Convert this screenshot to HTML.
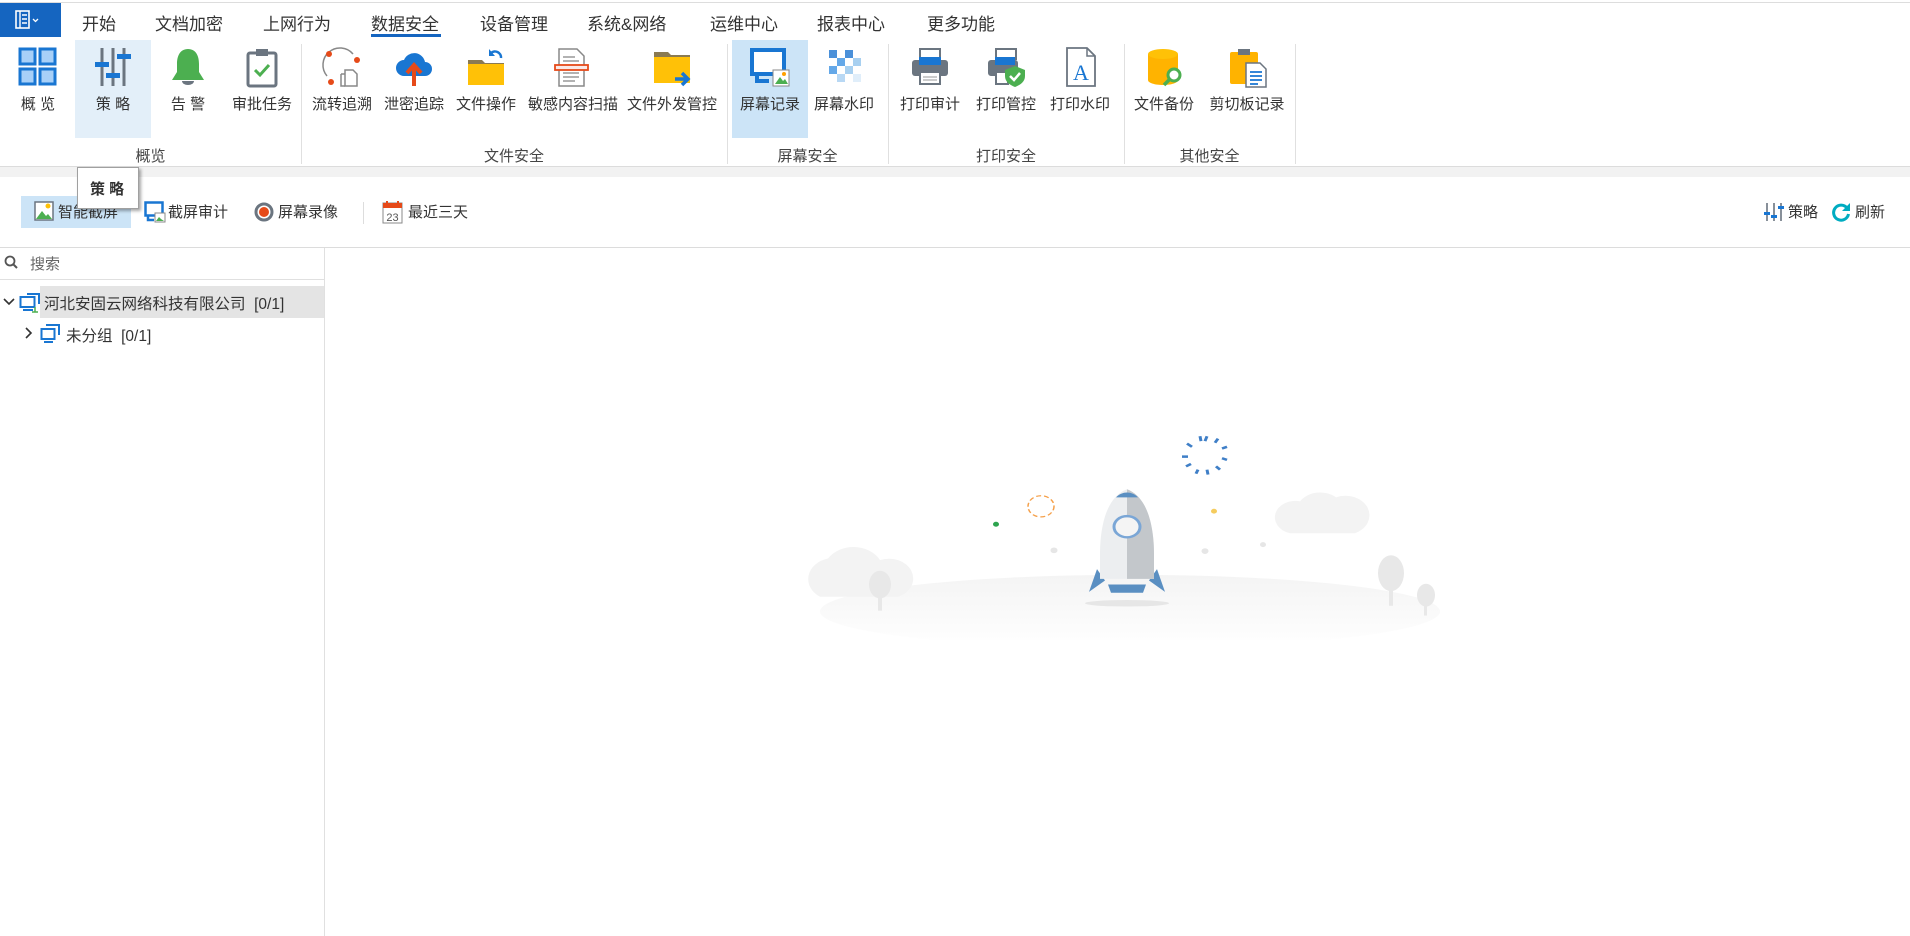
<!DOCTYPE html>
<html><head><meta charset="utf-8"><style>
*{margin:0;padding:0;box-sizing:border-box}
body{width:1910px;height:936px;background:#fff;font-family:"Liberation Sans","Noto Sans CJK SC",sans-serif;color:#333;position:relative;overflow:hidden}
.a{position:absolute}
.tab{position:absolute;top:10px;font-size:17px;color:#333;white-space:nowrap}
.btn{position:absolute;top:40px;height:98px;text-align:center}
.btn svg{position:absolute;left:50%;margin-left:-21px;top:6px}
.btn span{position:absolute;left:0;right:0;top:53px;font-size:15px;white-space:nowrap;color:#333}
.sep{position:absolute;top:44px;width:1px;height:120px;background:#e0e0e0}
.grp{position:absolute;top:145px;font-size:15px;color:#444;text-align:center}
.tb{position:absolute;top:201px;font-size:15px;white-space:nowrap}
</style></head><body>
<div class="a" style="left:0;top:2px;width:1910px;height:1px;background:#ddd"></div>
<div class="a" style="left:0;top:3px;width:61px;height:34px;background:#1565c0"></div>
<svg class="a" style="left:15px;top:10px" width="30" height="20" viewBox="0 0 30 20"><rect x="1" y="1" width="13" height="17" fill="none" stroke="#fff" stroke-width="1.6"/><path d="M5 1v17M7 5h5M7 9h5M7 13h5" stroke="#fff" stroke-width="1.4"/><path d="M18 9l2.5 2.5L23 9" stroke="#fff" stroke-width="1.3" fill="none"/></svg>
<div class="tab" style="left:82px">开始</div>
<div class="tab" style="left:155px">文档加密</div>
<div class="tab" style="left:263px">上网行为</div>
<div class="tab" style="left:371px">数据安全</div>
<div class="a" style="left:371px;top:34px;width:70px;height:3px;background:#1565c0"></div>
<div class="tab" style="left:480px">设备管理</div>
<div class="tab" style="left:587px">系统&amp;网络</div>
<div class="tab" style="left:710px">运维中心</div>
<div class="tab" style="left:817px">报表中心</div>
<div class="tab" style="left:927px">更多功能</div>

<div class="a" style="left:75px;top:40px;width:76px;height:98px;background:#e3eff9"></div>
<div class="a" style="left:732px;top:40px;width:76px;height:98px;background:#cce4f7"></div>

<div class="btn" style="left:0;width:76px"><svg width="42" height="42" viewBox="0 0 42 42"><g fill="#a8d0f8" stroke="#1976d2" stroke-width="3"><rect x="3" y="3" width="15" height="15"/><rect x="23" y="3" width="15" height="15"/><rect x="3" y="23" width="15" height="15"/><rect x="23" y="23" width="15" height="15"/></g></svg><span>概 览</span></div>
<div class="btn" style="left:75px;width:76px"><svg width="42" height="42" viewBox="0 0 42 42"><path d="M10 2v38M21 2v38M32 2v38" stroke="#6b7580" stroke-width="3"/><rect x="3" y="16" width="14" height="5" fill="#1976d2"/><rect x="14" y="27" width="14" height="5" fill="#1976d2"/><rect x="25" y="8" width="14" height="5" fill="#1976d2"/></svg><span>策 略</span></div>
<div class="btn" style="left:150px;width:76px"><svg width="42" height="42" viewBox="0 0 42 42"><path d="M21 3c-8 0-11 7-11 15v8l-5 8h32l-5-8v-8c0-8-3-15-11-15z" fill="#4caf50"/><path d="M15 35a6 4 0 0 0 12 0z" fill="#6b7580"/></svg><span>告 警</span></div>
<div class="btn" style="left:224px;width:76px"><svg width="42" height="42" viewBox="0 0 42 42"><rect x="7" y="7" width="28" height="33" rx="2" fill="#fff" stroke="#6b7580" stroke-width="3"/><rect x="15" y="3" width="12" height="7" fill="#6b7580"/><path d="M14 24l5 5 9-10" stroke="#4caf50" stroke-width="3" fill="none"/></svg><span>审批任务</span></div>
<div class="sep" style="left:301px"></div>
<div class="btn" style="left:304px;width:76px"><svg width="42" height="42" viewBox="0 0 42 42"><path d="M6 30A17 17 0 0 1 32 8" fill="none" stroke="#888" stroke-width="1.5"/><circle cx="8" cy="8" r="3" fill="#e64a19"/><circle cx="36" cy="14" r="3" fill="#e64a19"/><circle cx="10" cy="36" r="3" fill="#e64a19"/><path d="M24 24h8l4 4v12H24z" fill="#fff" stroke="#888" stroke-width="1.5"/><path d="M20 28h4M20 28v12h4" stroke="#888" stroke-width="1.5" fill="none"/></svg><span>流转追溯</span></div>
<div class="btn" style="left:376px;width:76px"><svg width="42" height="42" viewBox="0 0 42 42"><path d="M11 30a8 8 0 0 1 0-16a11 11 0 0 1 21 2a7 7 0 0 1 0 14z" fill="#1976d2"/><path d="M21 40V20M14 27l7-8 7 8" stroke="#e64a19" stroke-width="4" fill="none"/></svg><span>泄密追踪</span></div>
<div class="btn" style="left:448px;width:76px"><svg width="42" height="42" viewBox="0 0 42 42"><path d="M3 14h14l3 3h19v22H3z" fill="#8a7a52"/><rect x="3" y="18" width="36" height="21" fill="#ffc107"/><path d="M36 12a6 6 0 0 0-10-5" stroke="#1976d2" stroke-width="2.5" fill="none"/><path d="M24 3v7h6" fill="#1976d2"/></svg><span>文件操作</span></div>
<div class="btn" style="left:528px;width:86px"><svg width="42" height="42" viewBox="0 0 42 42"><path d="M9 3h18l7 7v30H9z" fill="#fff" stroke="#888" stroke-width="1.5"/><path d="M13 11h12M13 15h16M13 27h16M13 31h16M13 35h12" stroke="#999" stroke-width="1.5"/><rect x="5" y="19" width="33" height="5" fill="#fbe9e7" stroke="#e64a19" stroke-width="1.8"/></svg><span>敏感内容扫描</span></div>
<div class="btn" style="left:624px;width:96px"><svg width="42" height="42" viewBox="0 0 42 42"><path d="M3 6h14l3 3h19v28H3z" fill="#8a7a52"/><rect x="3" y="11" width="36" height="26" fill="#ffc107"/><path d="M24 33h12M31 27l6 6-6 6" stroke="#1976d2" stroke-width="3.5" fill="none"/></svg><span>文件外发管控</span></div>
<div class="sep" style="left:727px"></div>
<div class="btn" style="left:732px;width:76px"><svg width="42" height="42" viewBox="0 0 42 42"><rect x="3" y="4" width="32" height="24" fill="#fff" stroke="#1976d2" stroke-width="4"/><path d="M8 30v5h12" stroke="#1976d2" stroke-width="4" fill="none"/><rect x="24" y="24" width="16" height="16" fill="#fff" stroke="#888"/><path d="M26 38l5-7 3 4 2-2 3 5z" fill="#4caf50"/><circle cx="35" cy="28" r="2" fill="#ffa000"/></svg><span>屏幕记录</span></div>
<div class="btn" style="left:806px;width:76px"><svg width="42" height="42" viewBox="0 0 42 42"><rect x="6" y="4" width="8" height="8" fill="#4a90d9"/><rect x="22" y="4" width="8" height="8" fill="#4a90d9"/><rect x="14" y="12" width="8" height="8" fill="#64a8e8"/><rect x="30" y="12" width="8" height="8" fill="#a8d0f0"/><rect x="6" y="20" width="8" height="8" fill="#64a8e8"/><rect x="22" y="20" width="8" height="8" fill="#a8d0f0"/><rect x="14" y="28" width="8" height="8" fill="#b8d8f4"/><rect x="30" y="28" width="8" height="8" fill="#e0eefa"/></svg><span>屏幕水印</span></div>
<div class="sep" style="left:888px"></div>
<div class="btn" style="left:892px;width:76px"><svg width="42" height="42" viewBox="0 0 42 42"><rect x="11" y="3" width="20" height="10" fill="#fff" stroke="#6b7580" stroke-width="2"/><rect x="3" y="14" width="36" height="16" rx="3" fill="#6b7580"/><rect x="10" y="11" width="22" height="8" fill="#1976d2"/><rect x="11" y="26" width="20" height="12" fill="#fff" stroke="#6b7580" stroke-width="2"/><path d="M14 31h14M14 34h14" stroke="#999"/></svg><span>打印审计</span></div>
<div class="btn" style="left:968px;width:76px"><svg width="42" height="42" viewBox="0 0 42 42"><rect x="11" y="3" width="20" height="10" fill="#fff" stroke="#6b7580" stroke-width="2"/><rect x="3" y="14" width="30" height="16" rx="3" fill="#6b7580"/><rect x="10" y="11" width="20" height="8" fill="#1976d2"/><rect x="11" y="26" width="12" height="12" fill="#fff" stroke="#6b7580" stroke-width="2"/><path d="M30 20l10 4v6c0 6-5 9-10 11c-5-2-10-5-10-11v-6z" fill="#4caf50"/><path d="M25 30l4 4 6-7" stroke="#fff" stroke-width="2.5" fill="none"/></svg><span>打印管控</span></div>
<div class="btn" style="left:1042px;width:76px"><svg width="42" height="42" viewBox="0 0 42 42"><path d="M8 2h20l8 8v30H8z" fill="#fff" stroke="#6b7580" stroke-width="1.8"/><path d="M28 2v8h8" fill="none" stroke="#6b7580" stroke-width="1.5"/><text x="22" y="34" text-anchor="middle" font-family="Liberation Serif,serif" font-size="22" fill="#1976d2">A</text></svg><span>打印水印</span></div>
<div class="sep" style="left:1124px"></div>
<div class="btn" style="left:1126px;width:76px"><svg width="42" height="42" viewBox="0 0 42 42"><path d="M5 8v26c0 3 7 5 15 5s15-2 15-5V8z" fill="#ffb300"/><ellipse cx="20" cy="8" rx="15" ry="5" fill="#ffc107"/><circle cx="31" cy="29" r="6" fill="#fff" stroke="#4caf50" stroke-width="3"/><path d="M27 33l-6 6" stroke="#4caf50" stroke-width="3.5"/></svg><span>文件备份</span></div>
<div class="btn" style="left:1204px;width:86px"><svg width="42" height="42" viewBox="0 0 42 42"><rect x="4" y="6" width="28" height="32" rx="2" fill="#ffb300"/><rect x="12" y="3" width="12" height="6" fill="#6b7580"/><path d="M20 17h14l6 6v18H20z" fill="#fff" stroke="#6b7580" stroke-width="1.5"/><path d="M24 26h12M24 30h12M24 34h12M24 38h8" stroke="#1976d2" stroke-width="1.8"/></svg><span>剪切板记录</span></div>
<div class="sep" style="left:1295px"></div>

<div class="grp" style="left:0;width:301px">概览</div>
<div class="grp" style="left:301px;width:426px">文件安全</div>
<div class="grp" style="left:727px;width:161px">屏幕安全</div>
<div class="grp" style="left:888px;width:236px">打印安全</div>
<div class="grp" style="left:1124px;width:171px">其他安全</div>

<div class="a" style="left:0;top:166px;width:1910px;height:1px;background:#dcdcdc"></div>
<div class="a" style="left:0;top:167px;width:1910px;height:10px;background:#f2f2f2"></div>

<div class="a" style="left:21px;top:196px;width:110px;height:32px;background:#cce4f7"></div>
<svg class="a" style="left:34px;top:201px" width="20" height="20" viewBox="0 0 20 20"><rect x="1" y="1" width="18" height="18" fill="#fff" stroke="#6b7580" stroke-width="1.5"/><path d="M2 18l6-8 4 5 2-2 4 5z" fill="#4caf50"/><circle cx="14" cy="5" r="2.5" fill="#ffc107"/></svg>
<div class="tb" style="left:58px">智能截屏</div>
<svg class="a" style="left:144px;top:201px" width="22" height="22" viewBox="0 0 22 22"><rect x="1.5" y="1.5" width="17" height="13" fill="#fff" stroke="#1976d2" stroke-width="2.5"/><path d="M4 15v4h6" stroke="#1976d2" stroke-width="2.5" fill="none"/><rect x="11" y="12" width="10" height="9" fill="#fff" stroke="#888"/><path d="M12 20l3-4 2 2 3 2z" fill="#4caf50"/></svg>
<div class="tb" style="left:168px">截屏审计</div>
<svg class="a" style="left:254px;top:202px" width="20" height="20" viewBox="0 0 20 20"><circle cx="10" cy="10" r="8" fill="#fff" stroke="#6b7580" stroke-width="3"/><circle cx="10" cy="10" r="5" fill="#e64a19"/></svg>
<div class="tb" style="left:278px">屏幕录像</div>
<div class="a" style="left:363px;top:202px;width:1px;height:22px;background:#ddd"></div>
<svg class="a" style="left:382px;top:200px" width="21" height="24" viewBox="0 0 21 24"><rect x="1" y="3" width="19" height="20" fill="#fff" stroke="#888"/><rect x="1" y="3" width="19" height="5" fill="#e64a19"/><rect x="4" y="1" width="2" height="4" fill="#e64a19"/><rect x="15" y="1" width="2" height="4" fill="#e64a19"/><text x="10.5" y="21" text-anchor="middle" font-size="11" fill="#555" font-family="Liberation Sans">23</text></svg>
<div class="tb" style="left:408px">最近三天</div>

<svg class="a" style="left:1764px;top:202px" width="20" height="20" viewBox="0 0 20 20"><path d="M3 1v18M10 1v18M17 1v18" stroke="#6b7580" stroke-width="1.6"/><rect x="0" y="10" width="6" height="3" fill="#1976d2"/><rect x="7" y="13" width="6" height="3" fill="#1976d2"/><rect x="14" y="4" width="6" height="3" fill="#1976d2"/></svg>
<div class="tb" style="left:1788px">策略</div>
<svg class="a" style="left:1831px;top:202px" width="20" height="20" viewBox="0 0 20 20"><path d="M16 6A7.5 7.5 0 1 0 17.5 12" fill="none" stroke="#00acc1" stroke-width="3"/><path d="M19 1v8h-8z" fill="#00acc1"/></svg>
<div class="tb" style="left:1855px">刷新</div>

<div class="a" style="left:77px;top:167px;width:62px;height:42px;background:#fff;border:1px solid #a0a0a0;box-shadow:2px 2px 3px rgba(0,0,0,.35);font-size:15px;font-weight:bold;padding:10px 0 0 12px;color:#333">策 略</div>

<div class="a" style="left:0;top:247px;width:1910px;height:1px;background:#dcdcdc"></div>

<div class="a" style="left:324px;top:248px;width:1px;height:688px;background:#e0e0e0"></div>
<svg class="a" style="left:4px;top:255px" width="14" height="14" viewBox="0 0 14 14"><circle cx="6" cy="6" r="4.5" fill="none" stroke="#555" stroke-width="1.8"/><path d="M9.5 9.5L13 13" stroke="#555" stroke-width="2"/></svg>
<div class="a" style="left:30px;top:253px;font-size:15px;color:#666">搜索</div>
<div class="a" style="left:0;top:279px;width:324px;height:1px;background:#e0e0e0"></div>
<div class="a" style="left:40px;top:286px;width:284px;height:32px;background:#e4e4e4"></div>
<svg class="a" style="left:3px;top:297px" width="12" height="10" viewBox="0 0 12 10"><path d="M1 2l5 5 5-5" stroke="#333" stroke-width="1.6" fill="none"/></svg>
<svg class="a" style="left:19px;top:292px" width="22" height="22" viewBox="0 0 22 22"><rect x="1.5" y="5" width="14" height="10" fill="#fff" stroke="#1976d2" stroke-width="2"/><path d="M8 2h12v10" stroke="#1976d2" stroke-width="2" fill="none"/><path d="M4 18h10" stroke="#1976d2" stroke-width="2"/><path d="M16 15v5M13 20h6" stroke="#4caf50" stroke-width="1.5"/></svg>
<div class="a" style="left:44px;top:292px;font-size:15.5px;color:#333;white-space:nowrap">河北安固云网络科技有限公司 &nbsp;[0/1]</div>
<svg class="a" style="left:24px;top:327px" width="10" height="12" viewBox="0 0 10 12"><path d="M2 1l5 5-5 5" stroke="#333" stroke-width="1.6" fill="none"/></svg>
<svg class="a" style="left:40px;top:323px" width="22" height="22" viewBox="0 0 22 22"><rect x="1.5" y="6" width="13" height="10" fill="#fff" stroke="#1976d2" stroke-width="2"/><path d="M6 2h13v10" stroke="#1976d2" stroke-width="2" fill="none"/><path d="M4 19h9" stroke="#1976d2" stroke-width="2"/></svg>
<div class="a" style="left:66px;top:324px;font-size:15.5px;color:#333;white-space:nowrap">未分组 &nbsp;[0/1]</div>

<svg class="a" style="left:790px;top:420px" width="660" height="220" viewBox="0 0 660 220">
<defs><linearGradient id="g" x1="0" y1="0" x2="0" y2="1"><stop offset="0" stop-color="#f4f4f4"/><stop offset="1" stop-color="#fff"/></linearGradient></defs>
<g transform="translate(0,4) scale(1,0.815)">
<ellipse cx="340" cy="230" rx="310" ry="45" fill="url(#g)"/>
<path d="M30 212a26 26 0 0 1 8-47a30 30 0 0 1 52 2a22 22 0 0 1 18 45z" fill="#f3f3f3"/>
<path d="M500 134a20 20 0 0 1 10-39a24 24 0 0 1 36-5a20 20 0 0 1 19 44z" fill="#f3f3f3"/>
<ellipse cx="90" cy="197" rx="11" ry="17" fill="#e8e8e8"/><rect x="88" y="205" width="4" height="24" fill="#e8e8e8"/>
<ellipse cx="601" cy="183" rx="13" ry="22" fill="#e8e8e8"/><rect x="599" y="195" width="4" height="28" fill="#e8e8e8"/>
<ellipse cx="636" cy="210" rx="9" ry="14" fill="#e8e8e8"/><rect x="634" y="215" width="3" height="20" fill="#e8e8e8"/>
<ellipse cx="337" cy="220" rx="42" ry="4" fill="#e6e6e6"/>
<circle cx="206" cy="123" r="3" fill="#2ea44f"/>
<circle cx="264" cy="155" r="3.5" fill="#e6e6e6"/><circle cx="415" cy="156" r="3.5" fill="#e6e6e6"/><circle cx="473" cy="148" r="3" fill="#e6e6e6"/>
<circle cx="424" cy="107" r="3" fill="#f5cc5e"/>
<circle cx="251" cy="101" r="13" fill="none" stroke="#f5a04a" stroke-width="1.5" stroke-dasharray="5 3"/>
<g stroke="#3f7fc7" stroke-width="3"><path d="M415 21l2-6M425 23l3-5M432 30l5-2M432 42l5 2M426 52l4 4M417 56l1 6M408 56l-2 5M401 49l-5 3M398 40l-6 0M402 28l-5-4M411 21l-1-6"/></g>
<path d="M307 178l-8 28 16-14z" fill="#5a8fc2"/><path d="M367 178l8 28-16-14z" fill="#5a8fc2"/>
<path d="M337 80c-22 10-27 50-27 80v30h54v-30c0-30-5-70-27-80z" fill="#eceef0"/>
<path d="M337 80c22 10 27 50 27 80v30h-27z" fill="#c3c7cb"/>
<path d="M326 90c6-8 16-8 22 0z" fill="#5a8fc2"/>
<path d="M318 197h38l-3 10h-32z" fill="#5a8fc2"/>
<circle cx="337" cy="126" r="13" fill="#f4f4f4" stroke="#7aa6d6" stroke-width="3"/>
</g>
</svg>
</body></html>
